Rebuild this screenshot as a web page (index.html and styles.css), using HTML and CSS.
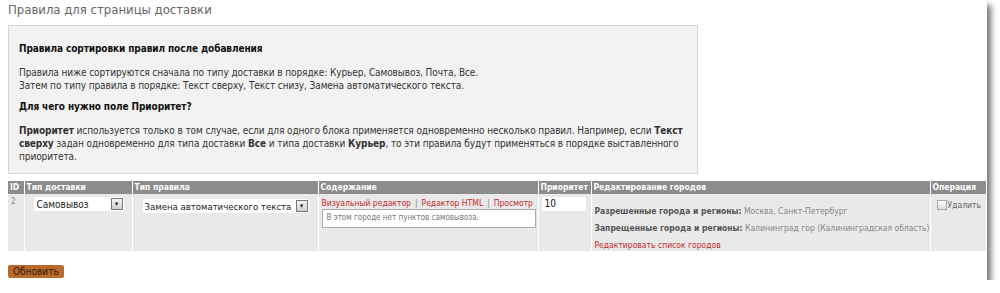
FILE: index.html
```html
<!DOCTYPE html>
<html lang="ru">

<head>
    <meta charset="UTF-8">
    <title>Правила для страницы доставки</title>
    <link rel="stylesheet" href="styles.css">
</head>

<body>
    <div class="page">
        <h2 class="page-title">Правила для страницы доставки</h2>

        <div class="info-box">
            <p class="info-head">Правила сортировки правил после добавления</p>
            <p>Правила ниже сортируются сначала по типу доставки в порядке: Курьер, Самовывоз, Почта, Все.<br>
                Затем по типу правила в порядке: Текст сверху, Текст снизу, Замена автоматического текста.</p>
            <p class="info-head">Для чего нужно поле Приоритет?</p>
            <p><b>Приоритет</b> используется только в том случае, если для одного блока применяется одновременно несколько правил. Например, если <b>Текст сверху</b> задан одновременно для типа доставки <b>Все</b> и типа доставки <b>Курьер</b>, то эти правила будут применяться в порядке выставленного приоритета.</p>
        </div>

        <table class="rules">
            <colgroup>
                <col class="w-id">
                <col class="w-delivery">
                <col class="w-type">
                <col class="w-content">
                <col class="w-priority">
                <col class="w-cities">
                <col class="w-op">
            </colgroup>
            <thead>
                <tr>
                    <th>ID</th>
                    <th>Тип доставки</th>
                    <th>Тип правила</th>
                    <th>Содержание</th>
                    <th>Приоритет</th>
                    <th>Редактирование городов</th>
                    <th>Операция</th>
                </tr>
            </thead>
            <tbody>
                <tr>
                    <td class="id-cell">2</td>
                    <td>
                        <div class="fake-select sel-delivery">
                            <span>Самовывоз</span>
                            <span class="arrow">&#9662;</span>
                        </div>
                    </td>
                    <td>
                        <div class="fake-select sel-type">
                            <span>Замена автоматического текста</span>
                            <span class="arrow">&#9662;</span>
                        </div>
                    </td>
                    <td>
                        <div class="editor-links">
                            <a href="#">Визуальный редактор</a><span class="sep">|</span><a href="#">Редактор HTML</a><span class="sep">|</span><a href="#">Просмотр</a>
                        </div>
                        <div class="editor-box">В этом городе нет пунктов самовывоза.</div>
                    </td>
                    <td>
                        <div class="priority-input">10</div>
                    </td>
                    <td class="cities">
                        <p><b>Разрешенные города и регионы:</b> Москва, Санкт-Петербург</p>
                        <p><b>Запрещенные города и регионы:</b> Калининград гор (Калининградская область)</p>
                        <a href="#">Редактировать список городов</a>
                    </td>
                    <td class="op-cell">
                        <label><span class="checkbox"></span>Удалить</label>
                    </td>
                </tr>
            </tbody>
        </table>

        <button class="update-btn">Обновить</button>
    </div>
</body>

</html>
```

FILE: styles.css
```css
body {
    margin: 0;
    background: #fff;
    font-family: "DejaVu Sans Condensed", "DejaVu Sans", sans-serif;
    font-stretch: condensed;
    font-size: 10px;
    color: #444;
}

.page {
    width: 987px;
    height: 280px;
    box-sizing: border-box;
    padding: 1px 0 0 8px;
    background: #fff;
    box-shadow: 4px 5px 6px rgba(0, 0, 0, 0.55);
}

.page-title {
    margin: 1px 0 7px 0;
    font-size: 13px;
    line-height: 16px;
    font-weight: normal;
    color: #666;
}

.info-box {
    width: 690px;
    height: 149px;
    box-sizing: border-box;
    padding: 16px 10px 0 10px;
    background: #f2f2f2;
    border: 1px solid #d8d8d8;
    color: #333;
    line-height: 13px;
    letter-spacing: -0.1px;
}

.info-box p {
    margin: 0 0 8px 0;
}

.info-box .info-head {
    margin-bottom: 11px;
    font-weight: bold;
    color: #111;
}

.rules {
    margin-top: 7px;
    width: 978px;
    table-layout: fixed;
    border-collapse: collapse;
    background: #e9e9e9;
}

.w-id { width: 16px; }
.w-delivery { width: 108px; }
.w-type { width: 186px; }
.w-content { width: 220px; }
.w-priority { width: 53px; }
.w-cities { width: 339px; }
.w-op { width: 56px; }

.rules th {
    background: #8c8c8c;
    color: #fff;
    font-size: 8.5px;
    text-align: left;
    padding: 0 2px;
    height: 13px;
    line-height: 13px;
    white-space: nowrap;
    overflow: hidden;
    border-left: 1px solid #fff;
}

.rules td {
    vertical-align: top;
    border-left: 1px solid #fff;
    padding: 3px 3px 0 3px;
    height: 52px;
    white-space: nowrap;
    overflow: hidden;
}

.rules th:first-child,
.rules td:first-child {
    border-left: none;
}

.id-cell {
    color: #888;
    font-size: 8px;
}

.fake-select {
    display: flex;
    align-items: center;
    justify-content: space-between;
    background: #fff;
    height: 14px;
    font-size: 10px;
    color: #222;
    padding-left: 3px;
    box-sizing: border-box;
}

.sel-delivery {
    width: 90px;
    margin: 0 0 0 6px;
}

.sel-type {
    width: 166px;
    margin: 2px 0 0 7px;
    padding-left: 2px;
    font-size: 9.5px;
}

.arrow {
    width: 10px;
    height: 10px;
    margin-right: 1px;
    border: 1px solid #777;
    background: linear-gradient(#f4f4f4, #cfcfcf);
    font-size: 7px;
    line-height: 10px;
    text-align: center;
    color: #222;
}

.editor-links {
    color: #888;
    font-size: 8.5px;
    line-height: 12px;
}

.sep {
    margin: 0 4px;
}

.editor-links a,
.cities a {
    color: #c62b2b;
    text-decoration: none;
}

.editor-box {
    width: 214px;
    height: 19px;
    box-sizing: border-box;
    border: 1px solid #aaa;
    background: #fff;
    color: #777;
    font-size: 8px;
    padding: 3px 4px;
}

.priority-input {
    width: 44px;
    height: 14px;
    background: #fff;
    font-size: 10px;
    color: #111;
    padding-left: 3px;
    box-sizing: border-box;
    line-height: 14px;
}

.cities {
    color: #888;
    font-size: 8.5px;
    line-height: 12px;
}

.cities p {
    margin: 0 0 5px 0;
}

.cities p:first-child {
    margin-top: 8px;
}

.cities b {
    color: #555;
}

.op-cell label {
    display: flex;
    align-items: center;
    color: #666;
    font-size: 8.5px;
    margin-top: 3px;
    margin-left: 3px;
}

.checkbox {
    width: 8px;
    height: 8px;
    border: 1px solid #aaa;
    background: linear-gradient(#fff, #ddd);
    margin-right: 1px;
}

.update-btn {
    display: block;
    margin-top: 14px;
    padding: 0 5px;
    height: 13px;
    font-family: inherit;
    font-stretch: condensed;
    font-size: 10px;
    color: #2b1a0a;
    background: #b96a2c;
    border: none;
    border-radius: 2px;
}
```
